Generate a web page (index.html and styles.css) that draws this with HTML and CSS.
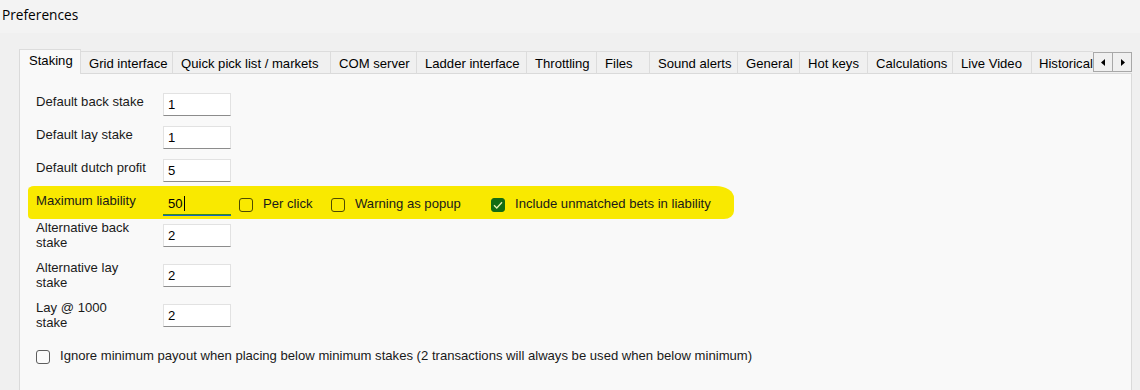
FILE: index.html
```html
<!DOCTYPE html>
<html lang="en">
<head>
    <meta charset="UTF-8">
    <title>Preferences</title>
    <link rel="stylesheet" href="styles.css">
</head>
<body>
    <div class="titlebar">Preferences</div>
    <div class="dialog">
        <div class="tabstrip">
            <div class="tabs">
                <div class="tab active">Staking</div>
                <div class="tab">Grid interface</div>
                <div class="tab">Quick pick list / markets</div>
                <div class="tab">COM server</div>
                <div class="tab">Ladder interface</div>
                <div class="tab">Throttling</div>
                <div class="tab">Files</div>
                <div class="tab">Sound alerts</div>
                <div class="tab">General</div>
                <div class="tab">Hot keys</div>
                <div class="tab">Calculations</div>
                <div class="tab">Live Video</div>
                <div class="tab last">Historical</div>
            </div>
            <div class="tab-scroll">
                <span class="scroll-btn">
                    <svg width="5" height="7" viewBox="0 0 5 7"><path d="M4 0 L0 3.5 L4 7 Z" fill="#000"/></svg>
                </span>
                <span class="scroll-btn">
                    <svg width="5" height="7" viewBox="0 0 5 7"><path d="M1 0 L5 3.5 L1 7 Z" fill="#000"/></svg>
                </span>
            </div>
        </div>
        <div class="panel">
            <div class="row">
                <div class="label">Default back stake</div>
                <div class="field">1</div>
            </div>
            <div class="row">
                <div class="label">Default lay stake</div>
                <div class="field">1</div>
            </div>
            <div class="row">
                <div class="label">Default dutch profit</div>
                <div class="field">5</div>
            </div>
            <!-- highlighted with marker in the screenshot -->
            <div class="row highlight">
                <div class="label">Maximum liability</div>
                <div class="field focused">50<span class="caret"></span></div>
                <label class="check per-click"><span class="box"></span>Per click</label>
                <label class="check popup"><span class="box"></span>Warning as popup</label>
                <label class="check">
                    <span class="box checked">
                        <svg width="10" height="8" viewBox="0 0 10 8"><path d="M1 4.2 L3.8 7 L9 1.2" fill="none" stroke="#e9f1b0" stroke-width="1.3"/></svg>
                    </span>Include unmatched bets in liability
                </label>
            </div>
            <div class="row tall">
                <div class="label">Alternative back<br>stake</div>
                <div class="field">2</div>
            </div>
            <div class="row tall">
                <div class="label">Alternative lay<br>stake</div>
                <div class="field">2</div>
            </div>
            <div class="row tall">
                <div class="label">Lay @ 1000<br>stake</div>
                <div class="field">2</div>
            </div>
            <label class="check bottom"><span class="box"></span>Ignore minimum payout when placing below minimum stakes (2 transactions will always be used when below minimum)</label>
        </div>
    </div>
</body>
</html>
```

FILE: styles.css
```css
body {
    margin: 0;
    background-color: #f0f0f0;
    font-family: "Liberation Sans", Arial, sans-serif;
    font-size: 13.1px;
    color: #1a1a1a;
    overflow: hidden;
}
.titlebar {
    height: 33px;
    padding: 0 2px;
    line-height: 30px;
    font-family: "Open Sans", sans-serif;
    font-size: 13.7px;
    color: #000;
    background-color: #f3f3f3;
}
.dialog {
    padding: 16px 8px 0 19px;
}
/* tab strip */
.tabstrip {
    display: flex;
    align-items: flex-end;
    height: 25px;
    margin-bottom: -1px;
    position: relative;
    z-index: 1;
}
.tabs {
    display: grid;
    grid-template-columns: 62px 92px 158px 86px 110px 70px 53px 88px 62px 68px 85px 79px 64px;
    align-items: end;
    width: 1077px;
    overflow: hidden;
}
.tab {
    box-sizing: border-box;
    height: 23px;
    padding-left: 8px;
    padding-top: 1px;
    line-height: 21px;
    white-space: nowrap;
    overflow: hidden;
    color: #000;
    background-color: #f0f0f0;
    border-top: 1px solid #dcdcdc;
    border-right: 1px solid #dcdcdc;
    border-bottom: 1px solid #dadada;
}
.tab.last {
    padding-left: 7px;
    border-right: none;
}
.tab.active {
    height: 25px;
    padding-left: 9px;
    padding-top: 0;
    line-height: 21px;
    background-color: #f9f9f9;
    border-left: 1px solid #dadada;
    border-bottom: none;
}
.tab-scroll {
    display: flex;
    align-self: flex-start;
    margin-top: 3px;
    border: 1px solid #a8a8a8;
}
.scroll-btn {
    display: flex;
    align-items: center;
    justify-content: center;
    width: 18px;
    height: 18px;
    background-color: #f0f0f0;
}
.scroll-btn + .scroll-btn {
    border-left: 1px solid #a8a8a8;
}
/* staking page */
.panel {
    height: 300px;
    padding: 19px 16px 0;
    background-color: #f9f9f9;
    border: 1px solid #dadada;
    border-bottom: none;
}
.row {
    display: flex;
    align-items: flex-start;
    margin-bottom: 10px;
}
.label {
    width: 127px;
    flex-shrink: 0;
    padding-top: 1px;
    line-height: 15px;
}
.field {
    box-sizing: border-box;
    width: 68px;
    height: 23px;
    padding: 3px 4px;
    line-height: 16px;
    color: #000;
    background-color: #fff;
    border: 1px solid #e2e2e2;
    border-bottom-color: #8c8c8c;
}
.row.tall .label {
    padding-top: 0;
}
.row.tall .field {
    margin-top: 4px;
}
.row.highlight {
    width: max-content;
    margin: -6px 0 1px -8px;
    padding: 6px 23px 4px 8px;
    background-color: #f9e900;
    border-radius: 6px 18px 10px 4px / 4px 12px 8px 4px;
}
.field.focused {
    background-color: transparent;
    border: none;
    border-bottom: 1px solid #3a8a1c;
    box-shadow: 0 1px 0 #1764c6;
    padding-left: 5px;
    padding-top: 4px;
}
.caret {
    display: inline-block;
    width: 1px;
    height: 15px;
    margin-left: 1px;
    vertical-align: -3px;
    background-color: #000;
}
.check {
    display: flex;
    align-items: center;
    height: 23px;
    white-space: nowrap;
}
.check .box {
    box-sizing: border-box;
    width: 14px;
    height: 14px;
    margin-right: 10px;
    margin-top: 2px;
    border: 1px solid #5e5e5e;
    border-radius: 3px;
    background-color: #fbfbfb;
    display: flex;
    align-items: center;
    justify-content: center;
}
.highlight .check .box {
    background-color: transparent;
    border-color: #4f4b00;
}
.highlight .check .box.checked {
    background-color: #136c12;
    border-color: #136c12;
}
.check.per-click {
    width: 92px;
    margin-left: 8px;
}
.check.popup {
    width: 160px;
}
.check.bottom {
    margin-top: 14px;
}
```
